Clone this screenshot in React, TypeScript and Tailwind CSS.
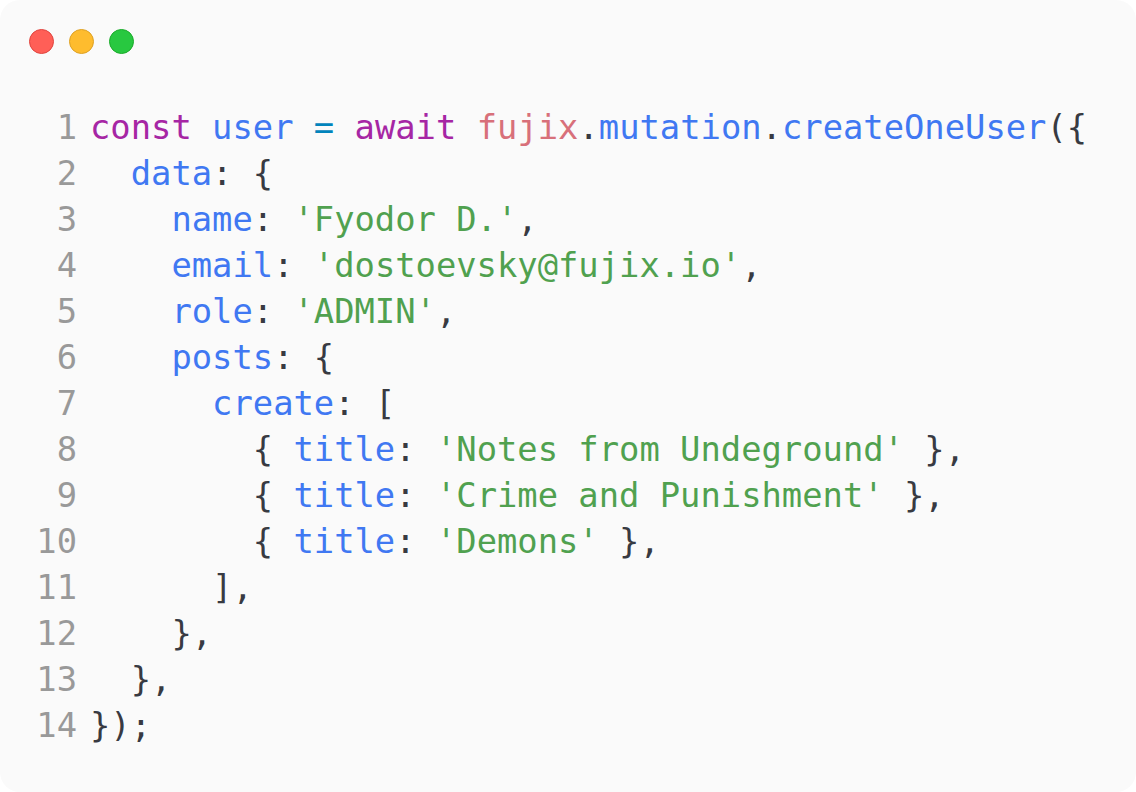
type Tok = [string, string];

const C = {
  kw: "text-[#a626a4]",
  prop: "text-[#4078f2]",
  op: "text-[#0184bc]",
  obj: "text-[#d8707a]",
  str: "text-[#50a14f]",
  punc: "text-[#383a42]",
};

const lines: Tok[][] = [
  [
    ["const", C.kw],
    [" ", C.punc],
    ["user", C.prop],
    [" ", C.punc],
    ["=", C.op],
    [" ", C.punc],
    ["await", C.kw],
    [" ", C.punc],
    ["fujix", C.obj],
    [".", C.punc],
    ["mutation", C.prop],
    [".", C.punc],
    ["createOneUser", C.prop],
    ["({", C.punc],
  ],
  [["  ", C.punc], ["data", C.prop], [": {", C.punc]],
  [["    ", C.punc], ["name", C.prop], [": ", C.punc], ["'Fyodor D.'", C.str], [",", C.punc]],
  [["    ", C.punc], ["email", C.prop], [": ", C.punc], ["'dostoevsky@fujix.io'", C.str], [",", C.punc]],
  [["    ", C.punc], ["role", C.prop], [": ", C.punc], ["'ADMIN'", C.str], [",", C.punc]],
  [["    ", C.punc], ["posts", C.prop], [": {", C.punc]],
  [["      ", C.punc], ["create", C.prop], [": [", C.punc]],
  [["        { ", C.punc], ["title", C.prop], [": ", C.punc], ["'Notes from Undeground'", C.str], [" },", C.punc]],
  [["        { ", C.punc], ["title", C.prop], [": ", C.punc], ["'Crime and Punishment'", C.str], [" },", C.punc]],
  [["        { ", C.punc], ["title", C.prop], [": ", C.punc], ["'Demons'", C.str], [" },", C.punc]],
  [["      ],", C.punc]],
  [["    },", C.punc]],
  [["  },", C.punc]],
  [["});", C.punc]],
];

function TrafficLights() {
  return (
    <div className="flex gap-[15px]">
      <span className="w-[25px] h-[25px] rounded-full bg-[#ff5f57] border border-[#e0443e]" />
      <span className="w-[25px] h-[25px] rounded-full bg-[#febc2e] border border-[#dea123]" />
      <span className="w-[25px] h-[25px] rounded-full bg-[#28c840] border border-[#1aab29]" />
    </div>
  );
}

export default function App() {
  return (
    <div className="w-[1136px] h-[792px] bg-white">
      <div className="w-full h-full rounded-[20px] bg-[#fafafa] pt-[29px] pl-[29px]">
        <TrafficLights />
        <div
          className="mt-[51px] flex flex-col text-[33.8px] leading-[46px] whitespace-pre"
          style={{ fontFamily: '"DejaVu Sans Mono", "Liberation Mono", monospace' }}
        >
          {lines.map((toks, i) => (
            <div key={i} className="flex">
              <span className="w-[48px] text-right text-[#999999]">{i + 1}</span>
              <span className="ml-[13px]">
                {toks.map(([t, cls], j) => (
                  <span key={j} className={cls}>
                    {t}
                  </span>
                ))}
              </span>
            </div>
          ))}
        </div>
      </div>
    </div>
  );
}
